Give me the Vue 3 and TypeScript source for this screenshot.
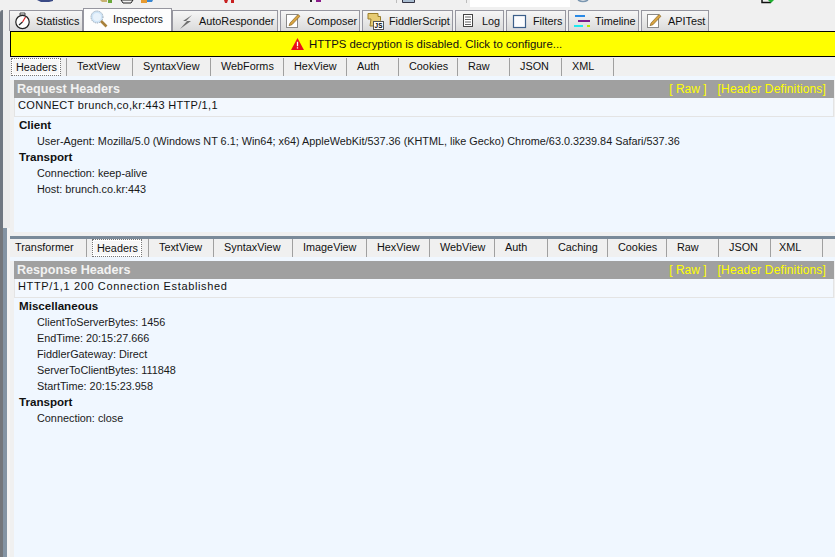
<script setup lang="ts">
interface Tab { label: string; w: number; icon?: string; active?: boolean; pad?: number }
const mainTabs: Tab[] = [
  { label: 'Statistics', w: 74, icon: 'clock' },
  { label: 'Inspectors', w: 89, icon: 'lens', active: true },
  { label: 'AutoResponder', w: 106, icon: 'bolt' },
  { label: 'Composer', w: 80, icon: 'pencil' },
  { label: 'FiddlerScript', w: 91, icon: 'script' },
  { label: 'Log', w: 49, icon: 'log' },
  { label: 'Filters', w: 60, icon: 'box' },
  { label: 'Timeline', w: 71, icon: 'time' },
  { label: 'APITest', w: 68, icon: 'pencil' },
]
const reqTabs: Tab[] = [
  { label: 'Headers', w: 57, active: true, pad: 1 },
  { label: 'TextView', w: 66 }, { label: 'SyntaxView', w: 78 }, { label: 'WebForms', w: 73 },
  { label: 'HexView', w: 63 }, { label: 'Auth', w: 52 }, { label: 'Cookies', w: 59 },
  { label: 'Raw', w: 52 }, { label: 'JSON', w: 52 }, { label: 'XML', w: 52 },
]
const resTabs: Tab[] = [
  { label: 'Transformer', w: 77, pad: 5 }, { label: 'Headers', w: 62, active: true, pad: 5 },
  { label: 'TextView', w: 65 }, { label: 'SyntaxView', w: 79 }, { label: 'ImageView', w: 74 },
  { label: 'HexView', w: 63 }, { label: 'WebView', w: 65 }, { label: 'Auth', w: 53 },
  { label: 'Caching', w: 60 }, { label: 'Cookies', w: 59 }, { label: 'Raw', w: 52 },
  { label: 'JSON', w: 52 }, { label: 'XML', w: 52, pad: 8 },
]
const reqTree = [
  { group: 'Client', items: ['User-Agent: Mozilla/5.0 (Windows NT 6.1; Win64; x64) AppleWebKit/537.36 (KHTML, like Gecko) Chrome/63.0.3239.84 Safari/537.36'] },
  { group: 'Transport', items: ['Connection: keep-alive', 'Host: brunch.co.kr:443'] },
]
const resTree = [
  { group: 'Miscellaneous', items: ['ClientToServerBytes: 1456', 'EndTime: 20:15:27.666', 'FiddlerGateway: Direct', 'ServerToClientBytes: 111848', 'StartTime: 20:15:23.958'] },
  { group: 'Transport', items: ['Connection: close'] },
]
</script>

<template>
  <div class="app">
    <svg class="topsliver" viewBox="0 0 835 10" width="835" height="10">
      <rect x="470" y="0" width="100" height="7" fill="#fff" />
      <path d="M396.500 0v3M466.500 0v3" stroke="#bdbdbd" />
      <path d="M37 0h16v1l-4 1h-8z" fill="#3a4a86" />
      <path d="M100 0h7v2h-5z" fill="#c8b070" />
      <path d="M108 0h4v3h-4z" fill="#6aa83a" />
      <path d="M121 0h12l-2 3h-8z" fill="none" stroke="#222" />
      <path d="M141 0h6v3h-6z" fill="#e69a30" />
      <path d="M147 0h6l-1 2h-5z" fill="#3a86d0" />
      <path d="M224 0h4l-1 3h-2zM231 0h3v3h-3z" fill="#c82020" />
      <rect x="310" y="0" width="2" height="2" fill="#222" />
      <rect x="316" y="0" width="5" height="2" fill="#8a1a8a" />
      <path d="M402.500 0v2.500h12V0" fill="#a8bcd0" stroke="#334" />
      <path d="M578 0q5 3 10 0" fill="none" stroke="#7a96b0" stroke-width="1.500" />
      <path d="M762 0v2.500h9" fill="none" stroke="#111" stroke-width="1.500" />
      <path d="M768 0h6l-3 3z" fill="#20b030" />
    </svg>
    <div class="body">
      <aside class="rail"><div class="rail-top"></div><div class="rail-bottom"></div></aside>
      <main class="main">
        <nav class="maintabs">
          <div v-for="t in mainTabs" :key="t.label" class="mtab" :class="{ on: t.active }" :style="{ width: t.w + 'px' }">
            <svg class="ic" viewBox="0 0 18 18" width="18" height="18">
              <template v-if="t.icon === 'clock'">
                <path d="M7 1h5v2H7z" fill="#fff" stroke="#222" stroke-width=".8" />
                <circle cx="9.500" cy="10" r="6.700" fill="#fff" stroke="#222" stroke-width="1.200" />
                <path d="M9.500 10L6 13" stroke="#222" stroke-width="1.200" fill="none" />
                <path d="M9.500 10l3-5" stroke="#d22" stroke-width="1.200" />
              </template>
              <template v-else-if="t.icon === 'lens'">
                <circle cx="7" cy="7" r="6" fill="#cfe4f6" stroke="#8a9aa8" stroke-dasharray="1 1" />
                <circle cx="7" cy="7" r="4" fill="#e8f2fb" />
                <path d="M11 11l5.500 5.500" stroke="#a8803a" stroke-width="2.600" />
              </template>
              <path v-else-if="t.icon === 'bolt'" d="M16 3L7 9h4L4 17l11-8h-5l6-6z" fill="#6e6e6e" />
              <template v-else-if="t.icon === 'pencil'">
                <rect x="2.500" y="2.500" width="11" height="13" fill="#fff" stroke="#8a8a8a" />
                <path d="M6 11l8-8.500 2 1.700-8 8.500-3 1z" fill="#d9a441" stroke="#7a5a20" stroke-width=".6" />
              </template>
              <template v-else-if="t.icon === 'script'">
                <path d="M2 1.500h10v3h2.500v4L12 14H4l1-7H2z" fill="#e6cb73" stroke="#9a7d2a" />
                <rect x="7.500" y="9.500" width="10" height="8" fill="#fff" stroke="#555" />
                <text x="8.600" y="16.200" font-size="6.400" font-weight="700" font-family="Liberation Sans, sans-serif">JS</text>
              </template>
              <template v-else-if="t.icon === 'log'">
                <rect x="4.500" y="2.500" width="9" height="12" fill="#fff" stroke="#444" />
                <path d="M6 5h6M6 7.500h6M6 10h6M6 12.500h6" stroke="#666" />
              </template>
              <rect v-else-if="t.icon === 'box'" x="3.500" y="3.500" width="12" height="12" fill="#fbfcfe" stroke="#3c5f8a" stroke-width="1.200" />
              <template v-else-if="t.icon === 'time'">
                <path d="M3 4h10" stroke="#2a8ae6" stroke-width="2" />
                <path d="M6 9h12" stroke="#7a1a8a" stroke-width="2" />
                <path d="M2 14h9" stroke="#1fe8f0" stroke-width="2" />
                <path d="M15 14h3" stroke="#b6e600" stroke-width="2" />
              </template>
            </svg>
            <span>{{ t.label }}</span>
          </div>
        </nav>
        <div class="banner">
          <svg viewBox="0 0 14 13" width="13" height="12"><path d="M7 0l7 13H0z" fill="#e8101a" /><path d="M6.300 4h1.400v5H6.300zM6.300 10h1.400v1.500H6.300z" fill="#fff" /></svg>
          <span>HTTPS decryption is disabled. Click to configure...</span>
        </div>
        <section class="pane req">
          <nav class="subtabs">
            <div v-for="t in reqTabs" :key="t.label" class="stab" :style="{ width: t.w + 'px', paddingLeft: (t.pad ?? 10) + 'px' }"><span :class="{ box: t.active }">{{ t.label }}</span></div>
          </nav>
          <div class="inner gap">
            <div class="bar"><b>Request Headers</b><span class="links"><span>[ Raw ]</span><span class="defs">[Header Definitions]</span></span></div>
            <div class="line tight">CONNECT brunch,co,kr:443 HTTP/1,1</div>
            <div class="tree">
              <template v-for="g in reqTree" :key="g.group">
                <div class="grp">{{ g.group }}</div>
                <div v-for="i in g.items" :key="i" class="item">{{ i }}</div>
              </template>
            </div>
          </div>
        </section>
        <div class="splitter"></div>
        <section class="pane res">
          <nav class="subtabs">
            <div v-for="t in resTabs" :key="t.label" class="stab" :style="{ width: t.w + 'px', paddingLeft: (t.pad ?? 10) + 'px' }"><span :class="{ box: t.active }">{{ t.label }}</span></div>
          </nav>
          <div class="inner">
            <div class="bar"><b>Response Headers</b><span class="links"><span>[ Raw ]</span><span class="defs">[Header Definitions]</span></span></div>
            <div class="line wide">HTTP/1,1 200 Connection Established</div>
            <div class="tree">
              <template v-for="g in resTree" :key="g.group">
                <div class="grp">{{ g.group }}</div>
                <div v-for="i in g.items" :key="i" class="item">{{ i }}</div>
              </template>
            </div>
          </div>
        </section>
      </main>
    </div>
  </div>
</template>

<style>
html, body { margin: 0; padding: 0; background: #f0f7ff; overflow: hidden; }
</style>

<style scoped>
.app { width: 835px; height: 557px; display: flex; flex-direction: column; font-family: "Liberation Sans", Arial, sans-serif; font-size: 10.85px; color: #111; background: #f0f0f0; overflow: hidden; }
.topsliver { display: block; flex: none; background: #f0f0f0; }
.body { flex: 1; display: flex; min-height: 0; }
.rail { width: 10px; flex: none; display: flex; flex-direction: column; }
.rail-top { height: 218px; flex: none; background: linear-gradient(90deg, #6f7680 0, #6f7680 3px, #ececec 3px); border-radius: 3px 0 0 0; }
.rail-bottom { flex: 1; background: linear-gradient(90deg, #74777c 0, #74777c 3px, #8494a4 3px, #8494a4 7px, #f4f4f4 7px); }
.main { flex: 1; min-width: 0; display: flex; flex-direction: column; }
.maintabs { height: 21px; flex: none; display: flex; align-items: flex-start; margin-left: -1px; }
.mtab { height: 21px; box-sizing: border-box; margin-right: 2px; display: flex; align-items: center; gap: 5px; padding-left: 3px; background: linear-gradient(#f6f6f6, #dadada); border: 1px solid #96969f; border-bottom: 0; white-space: nowrap; }
.mtab.on { height: 23px; margin: -2px 0 0 -2px; padding: 0 0 2px 6px; background: #fdfdfd; position: relative; }
.ic { flex: none; }
.banner { height: 26px; flex: none; box-sizing: border-box; background: #ff0; border: 1px solid #000; border-right: 0; display: flex; align-items: center; gap: 5px; padding-left: 280px; font-size: 11.4px; }
.pane { display: flex; flex-direction: column; background: #f0f7ff; }
.req { height: 178px; flex: none; margin-top: 1px; }
.res { flex: 1; min-height: 0; }
.subtabs { height: 18px; display: flex; background: #f0f0f0; flex: none; margin-bottom: 4px; }
.stab { height: 18px; box-sizing: border-box; display: flex; align-items: flex-start; line-height: 17px; border-right: 1px solid #a0a0a0; white-space: nowrap; }
.box { height: 18px; width: 50px; box-sizing: border-box; padding-left: 4px; background: #f7f7f7; border: 1px dotted #777; box-shadow: inset 0 0 0 1px #fff; }
.inner { flex: 1; min-height: 0; padding: 0 1px 0 4px; background: #f0f0f0; display: flex; flex-direction: column; }
.inner.gap { padding-bottom: 4px; }
.bar { height: 18px; flex: none; box-sizing: border-box; padding: 0 8px 0 3px; background: #a0a0a0; display: flex; align-items: center; justify-content: space-between; }
.bar b { color: #f2f2f2; font-size: 12.6px; }
.links { display: flex; gap: 11px; color: #ff0; font-size: 12px; }
.defs { letter-spacing: .15px; }
.line { height: 19px; flex: none; box-sizing: border-box; background: #f3f8fe; border: 1px solid #e4e4e4; border-top: 0; padding-left: 3px; line-height: 15px; font-size: 11px; }
.tight { letter-spacing: .32px; }
.wide { letter-spacing: .64px; }
.tree { flex: 1; padding: 0 0 0 5px; line-height: 16px; background: #f0f7ff; margin-right: -1px; }
.grp { font-weight: 700; font-size: 11.6px; height: 16px; line-height: 16px; }
.item { padding-left: 18px; color: #1a1a1a; }
.splitter { height: 3px; background: #7a8a99; flex: none; }
</style>
